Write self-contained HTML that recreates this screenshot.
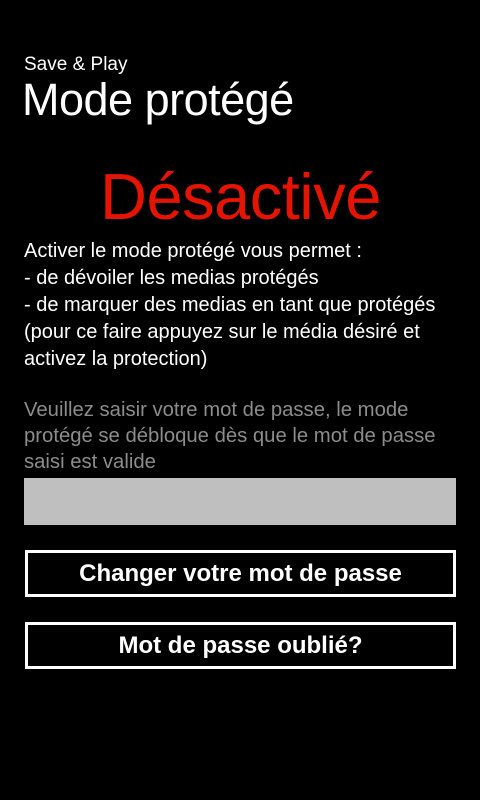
<!DOCTYPE html>
<html><head><meta charset="utf-8"><style>
html,body{margin:0;padding:0;background:#000;width:480px;height:800px;overflow:hidden;font-family:"Liberation Sans",sans-serif;color:#fff}
.a{position:absolute;white-space:nowrap}
.btn{position:absolute;left:25px;width:431px;border:3px solid #fff;box-sizing:border-box;text-align:center;font-size:24px;font-weight:bold;color:#fff}
</style></head><body>
<div class="a" style="left:24px;top:54px;font-size:19px">Save &amp; Play</div>
<div class="a" style="left:22px;top:74px;font-size:45px;letter-spacing:-0.5px">Mode protégé</div>
<div class="a" style="left:100px;top:159px;font-size:65px;color:#e51400;letter-spacing:-0.5px">Désactivé</div>
<div class="a" style="left:24px;top:238px;font-size:20px;line-height:27px">Activer le mode protégé vous permet :<br>- de dévoiler les medias protégés<br>- de marquer des medias en tant que protégés<br>(pour ce faire appuyez sur le média désiré et<br>activez la protection)</div>
<div class="a" style="left:24px;top:397px;font-size:20.3px;line-height:26px;color:#8c8c8c">Veuillez saisir votre mot de passe, le mode<br>protégé se débloque dès que le mot de passe<br>saisi est valide</div>
<div style="position:absolute;left:24px;top:478px;width:432px;height:47px;background:#bfbfbf"></div>
<div class="btn" style="top:550px;height:47px;line-height:41px">Changer votre mot de passe</div>
<div class="btn" style="top:622px;height:47px;line-height:41px">Mot de passe oublié?</div>
</body></html>
